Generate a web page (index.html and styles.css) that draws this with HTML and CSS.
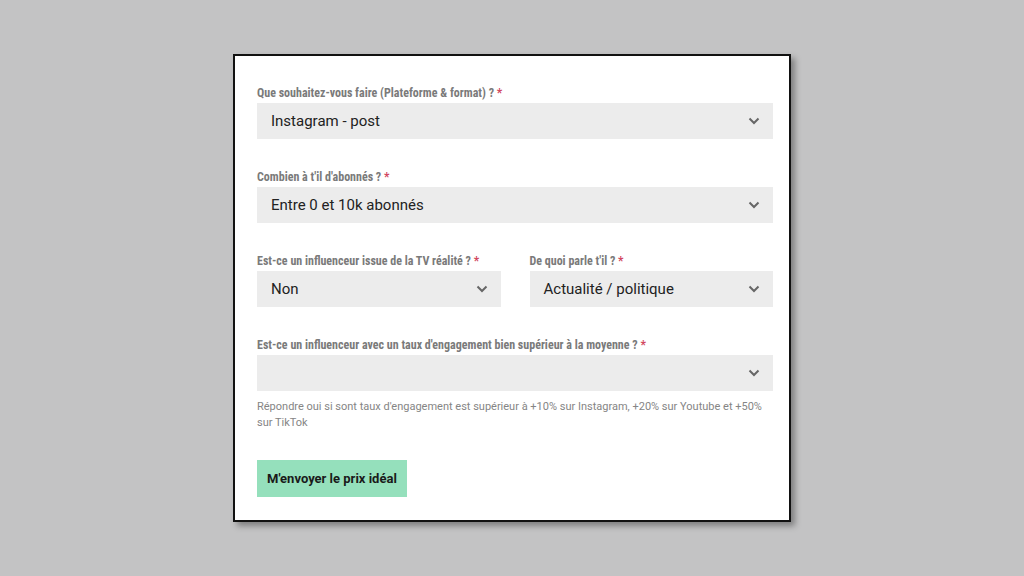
FILE: index.html
```html
<!DOCTYPE html>
<html lang="fr">
<head>
    <meta charset="UTF-8">
    <meta name="viewport" content="width=device-width, initial-scale=1.0">
    <title>Prix influenceur</title>
    <link rel="stylesheet" href="styles.css">
</head>
<body>

    <form class="card" id="price-form">
        <div class="field">
            <label for="platform">Que souhaitez-vous faire (Plateforme &amp; format) ? <span class="req">*</span></label>
            <div class="select">
                <span>Instagram - post</span>
                <svg class="chevron" viewBox="0 0 12 8" width="12" height="8"><path d="M1.5 1.5 L6 6 L10.5 1.5" /></svg>
            </div>
        </div>

        <div class="field">
            <label for="followers">Combien à t'il d'abonnés ? <span class="req">*</span></label>
            <div class="select">
                <span>Entre 0 et 10k abonnés</span>
                <svg class="chevron" viewBox="0 0 12 8" width="12" height="8"><path d="M1.5 1.5 L6 6 L10.5 1.5" /></svg>
            </div>
        </div>

        <div class="field-row">
            <div class="field">
                <label for="tv">Est-ce un influenceur issue de la TV réalité ? <span class="req">*</span></label>
                <div class="select">
                    <span>Non</span>
                    <svg class="chevron" viewBox="0 0 12 8" width="12" height="8"><path d="M1.5 1.5 L6 6 L10.5 1.5" /></svg>
                </div>
            </div>
            <div class="field">
                <label for="topic">De quoi parle t'il ? <span class="req">*</span></label>
                <div class="select">
                    <span>Actualité / politique</span>
                    <svg class="chevron" viewBox="0 0 12 8" width="12" height="8"><path d="M1.5 1.5 L6 6 L10.5 1.5" /></svg>
                </div>
            </div>
        </div>

        <div class="field">
            <label for="engagement">Est-ce un influenceur avec un taux d'engagement bien supérieur à la moyenne ? <span class="req">*</span></label>
            <div class="select">
                <span></span>
                <svg class="chevron" viewBox="0 0 12 8" width="12" height="8"><path d="M1.5 1.5 L6 6 L10.5 1.5" /></svg>
            </div>
            <p class="help">Répondre oui si sont taux d'engagement est supérieur à +10% sur Instagram, +20% sur Youtube et +50% sur TikTok</p>
        </div>

        <button type="submit">M'envoyer le prix idéal</button>
    </form>

</body>
</html>
```

FILE: styles.css
```css
body {
    margin: 0;
    height: 576px;
    background-color: #c3c3c4;
    font-family: 'Roboto', 'Liberation Sans', sans-serif;
    color: #222;
    overflow: hidden;
}
.card {
    box-sizing: border-box;
    width: 558px;
    height: 468px;
    margin: 54px 0 0 233px;
    padding: 30px 16px 0 22px;
    background-color: #fff;
    border: 2px solid #111;
    box-shadow: 4px 4px 6px rgba(0, 0, 0, 0.35);
}
.field {
    margin-bottom: 31px;
}
.field-row {
    display: flex;
    gap: 29px;
}
.field-row .field {
    flex: 1;
}
label {
    display: block;
    font-family: 'Liberation Sans Narrow', 'Roboto Condensed', 'Roboto', sans-serif;
    font-weight: bold;
    font-size: 12px;
    line-height: 14px;
    color: #7a7a7a;
    margin-bottom: 3px;
}
.req {
    color: #d2485f;
}
.select {
    display: flex;
    align-items: center;
    justify-content: space-between;
    height: 36px;
    padding: 0 14px;
    background-color: #ececec;
    font-size: 15px;
    color: #222;
}
.chevron {
    fill: none;
    stroke: #666;
    stroke-width: 2;
    margin-right: -1px;
}
.help {
    margin: 8px 0 0;
    font-size: 11px;
    line-height: 16px;
    color: #858585;
}
button {
    margin-top: -2px;
    height: 37px;
    padding: 0 10px;
    background-color: #95e0bc;
    color: #1a1a1a;
    font-family: 'Roboto', sans-serif;
    font-weight: bold;
    font-size: 13px;
    border: none;
    cursor: pointer;
}
```
